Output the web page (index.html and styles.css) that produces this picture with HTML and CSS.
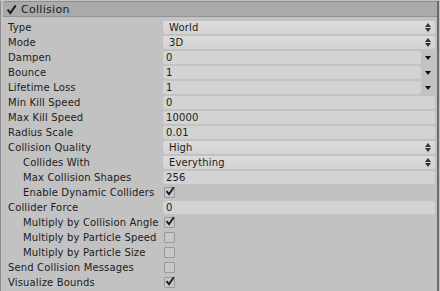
FILE: index.html
```html
<!DOCTYPE html>
<html lang="en">
<head>
    <meta charset="UTF-8">
    <title>Collision</title>
    <link rel="stylesheet" href="styles.css">
</head>
<body>
    <div class="panel">
        <div class="header">
            <svg class="check big" viewBox="0 0 10 10"><path d="M1.5 5.2 L4 8.2 L8.8 1.2" /></svg>
            <span>Collision</span>
        </div>
        <div class="rows">
            <div class="row"><span class="label">Type</span><div class="popup">World<i class="updown"></i></div></div>
            <div class="row"><span class="label">Mode</span><div class="popup">3D<i class="updown"></i></div></div>
            <div class="row"><span class="label">Dampen</span><div class="curve"><div class="field">0</div><i class="down"></i></div></div>
            <div class="row"><span class="label">Bounce</span><div class="curve"><div class="field">1</div><i class="down"></i></div></div>
            <div class="row"><span class="label">Lifetime Loss</span><div class="curve"><div class="field">1</div><i class="down"></i></div></div>
            <div class="row"><span class="label">Min Kill Speed</span><div class="field">0</div></div>
            <div class="row"><span class="label">Max Kill Speed</span><div class="field">10000</div></div>
            <div class="row"><span class="label">Radius Scale</span><div class="field">0.01</div></div>
            <div class="row"><span class="label">Collision Quality</span><div class="popup">High<i class="updown"></i></div></div>
            <div class="row"><span class="label sub">Collides With</span><div class="popup">Everything<i class="updown"></i></div></div>
            <div class="row"><span class="label sub">Max Collision Shapes</span><div class="field">256</div></div>
            <div class="row"><span class="label sub">Enable Dynamic Colliders</span><div class="box on"><svg class="check" viewBox="0 0 10 10"><path d="M1.5 5.2 L4 8.2 L8.8 1.2" /></svg></div></div>
            <div class="row"><span class="label">Collider Force</span><div class="field">0</div></div>
            <div class="row"><span class="label sub">Multiply by Collision Angle</span><div class="box on"><svg class="check" viewBox="0 0 10 10"><path d="M1.5 5.2 L4 8.2 L8.8 1.2" /></svg></div></div>
            <div class="row"><span class="label sub">Multiply by Particle Speed</span><div class="box"></div></div>
            <div class="row"><span class="label sub">Multiply by Particle Size</span><div class="box"></div></div>
            <div class="row"><span class="label">Send Collision Messages</span><div class="box"></div></div>
            <div class="row"><span class="label">Visualize Bounds</span><div class="box on"><svg class="check" viewBox="0 0 10 10"><path d="M1.5 5.2 L4 8.2 L8.8 1.2" /></svg></div></div>
        </div>
    </div>
</body>
</html>
```

FILE: styles.css
```css
body {
    margin: 0;
    background-color: #c2c2c2;
    font-family: "DejaVu Sans", Verdana, sans-serif;
    font-size: 10px;
    color: #1c1c1c;
    height: 291px;
    overflow: hidden;
}

.panel {
    width: 439px;
    height: 291px;
    border-left: 1px solid #8c8c8c;
    border-right: 2px solid #6b6b6b;
    box-sizing: border-box;
}

.header {
    height: 16px;
    margin: 1px 0 0 2px;
    background-color: #aaaaaa;
    border-top: 1px solid #8e8e8e;
    border-bottom: 1px solid #939393;
    border-radius: 3px 0 0 0;
    display: flex;
    align-items: center;
    gap: 4px;
    padding-left: 3px;
    box-sizing: border-box;
    font-size: 11px;
    letter-spacing: 0.3px;
}

.check {
    width: 10px;
    height: 10px;
    fill: none;
    stroke: #1a1a1a;
    stroke-width: 1.8;
}

.big {
    width: 11px;
    height: 11px;
}

.rows {
    padding-top: 3px;
}

.row {
    height: 15px;
    display: flex;
    align-items: center;
    letter-spacing: 0.15px;
}

.label {
    width: 155px;
    padding-left: 7px;
    flex-shrink: 0;
    white-space: nowrap;
}

.label.sub {
    padding-left: 22px;
    width: 140px;
}

.field {
    flex: 1;
    height: 13px;
    line-height: 13px;
    background-color: #d3d3d3;
    border-radius: 2px;
    padding-left: 3px;
    margin-right: 2px;
}

.popup {
    flex: 1;
    height: 13px;
    line-height: 13px;
    background: linear-gradient(#dcdcdc, #d2d2d2);
    border-radius: 2px;
    padding-left: 6px;
    margin-right: 2px;
    position: relative;
}

.curve {
    flex: 1;
    display: flex;
    align-items: center;
    margin-right: 2px;
}

.curve .field {
    margin-right: 0;
}

.down {
    width: 14px;
    height: 13px;
    display: flex;
    align-items: center;
    justify-content: center;
}

.down::after {
    content: "";
    border-left: 3px solid transparent;
    border-right: 3px solid transparent;
    border-top: 4px solid #111;
}

.updown {
    position: absolute;
    right: 4px;
    top: 2px;
    width: 6px;
    height: 9px;
}

.updown::before,
.updown::after {
    content: "";
    position: absolute;
    left: 0;
    border-left: 3px solid transparent;
    border-right: 3px solid transparent;
}

.updown::before {
    top: 0;
    border-bottom: 4px solid #333;
}

.updown::after {
    bottom: 0;
    border-top: 4px solid #333;
}

.box {
    width: 9px;
    height: 9px;
    margin-left: 1px;
    border: 1px solid #999;
    background-color: #c8c8c8;
    border-radius: 1px;
    position: relative;
}

.box .check {
    position: absolute;
    left: 0;
    top: -2px;
}
```
